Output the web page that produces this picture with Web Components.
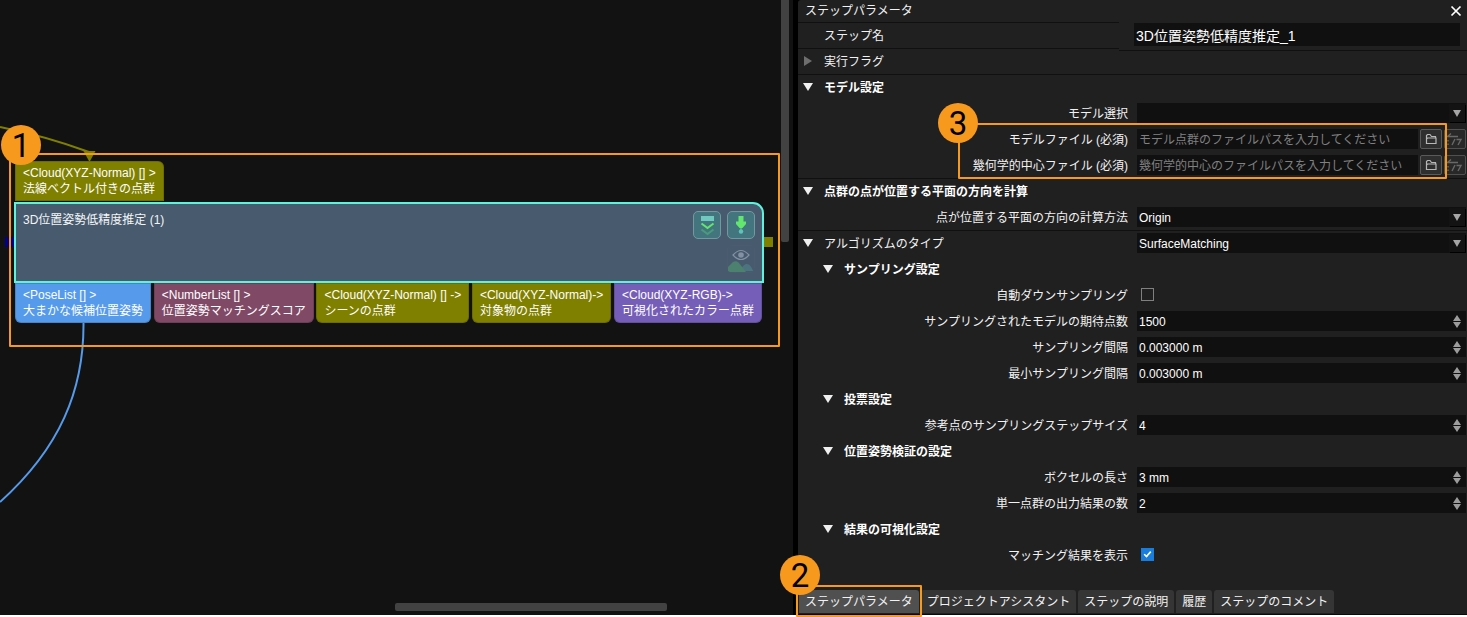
<!DOCTYPE html>
<html lang="ja">
<head>
<meta charset="utf-8">
<title>ステップパラメータ</title>
<style>
html { background: #fff; }
body { margin: 0; font: 12px/16px "Liberation Sans", "Noto Sans CJK JP", sans-serif; color: #f2f2f2; }
</style>
</head>
<body>
<vision-app></vision-app>
<script>
function define(name, html, build) {
  const template = document.createElement('template');
  template.innerHTML = html;
  customElements.define(name, class extends HTMLElement {
    connectedCallback() {
      if (this.shadowRoot) return;
      const root = this.attachShadow({ mode: 'open' });
      root.append(template.content.cloneNode(true));
      if (build) build(this, root);
    }
  });
}

/* Outline with a numbered badge on its corner */
define('call-out', `
<style>
:host { position: absolute; box-sizing: border-box; border: 2px solid #f7991d; border-radius: 1px; pointer-events: none; z-index: 5; }
b { position: absolute; left: var(--bx, -10px); top: var(--by, -30px); width: 40px; height: 40px; border-radius: 50%; background: #f7991d; color: #000; font: 400 33px/42px Roboto, sans-serif; text-align: center; }
</style><b><slot></slot></b>`);

/* Typed port of a step */
define('step-port', `
<style>
:host { display: block; box-sizing: border-box; height: 40px; padding: 4px 8px; background: var(--port, #808000); color: #fff; border-radius: 0 0 6px 6px; white-space: nowrap; box-shadow: inset 0 0 0 1px rgba(0,0,0,.15); }
:host([input]) { border-radius: 0 6px 0 0; }
div { height: 16px; }
</style><div><slot name="type"></slot></div><div><slot></slot></div>`);

define('step-node', `
<style>
:host { display: block; }
.in { display: flex; margin-left: 1px; }
.body { position: relative; box-sizing: border-box; width: 750px; height: 81px; margin: 1px 0 0; padding: 8px 7px; border: 2px solid #5cf2dc; border-radius: 0 11px 0 0; background: #485a6e; display: flex; justify-content: space-between; color: #f2f5f7; }
.tools { display: grid; grid-template-columns: 28px 28px; gap: 6px; align-content: start; margin-top: -1px; }
button { width: 28px; height: 28px; padding: 0; border: 1px solid #73999f; border-radius: 5px; background: #43757f; display: block; }
button.view { grid-column: 2; border-color: #4b5c70; background: none; }
svg { display: block; }
.out { display: flex; justify-content: space-between; width: 747px; margin-left: 1px; }
</style>
<div class="in"><slot name="in"></slot></div>
<div class="body"><span><slot name="name"></slot></span>
<div class="tools">
<button aria-label="ここまで実行"><svg width="26" height="26"><path fill="#6fc9bf" d="M7 4h13v5H7z"/><path d="M7.500 11.500l6 4.500 6-4.500" fill="none" stroke="#62e66e" stroke-width="2"/><path d="M7.500 17.500l6 4.500 6-4.500" fill="none" stroke="#4a9b7d" stroke-width="2"/></svg></button>
<button aria-label="実行"><svg width="26" height="26"><path fill="#62e66e" d="M10.500 4h5v5.500H18v2.500l-3.500 4h-3L8 12V9.500h2.500z"/><path d="M13 15v4" stroke="#62e66e" stroke-width="1"/><circle cx="13" cy="19.500" r="2.200" fill="#5fc3bd"/></svg></button>
<button class="view" aria-label="表示"><svg width="26" height="26"><path d="M12 25c3-5 4-7 7-7 3 0 5 4 6 7z" fill="#4b7480"/><path d="M0 25v-4l5-5c2-1 4-1 6 1l7 9H2z" fill="#4c806f"/><path d="M5 9q8-9 16 0q-8 9-16 0z" fill="none" stroke="#8291a3" stroke-width="1.200"/><circle cx="13" cy="9" r="2.800" fill="#8291a3"/></svg></button>
</div></div>
<div class="out"><slot name="out"></slot></div>`);

define('graph-canvas', `
<style>
:host { display: block; position: relative; background: #121212; min-width: 0; }
.edges { position: absolute; left: 0; top: 0; }
.lane { position: absolute; inset: 0; overflow: hidden; }
step-node { position: absolute; left: 14px; top: 161px; }
.v, .h { position: absolute; background: #424242; border-radius: 2px; }
.v { right: 4px; top: 0; width: 8px; height: 242px; border-radius: 0 0 2px 2px; }
.h { left: 395px; bottom: 4px; width: 272px; height: 8px; }
</style>
<div class="lane">
<svg class="edges" width="780" height="600">
<path d="M0 127Q45 136 89 152" fill="none" stroke="#808000" stroke-width="2"/>
<path d="M83.500 151h12l-6 11z" fill="#808000"/>
<path d="M83.500 323C84 390 60 448 0 502" fill="none" stroke="#559aeb" stroke-width="2"/>
<path d="M5 237h10v10H5z" fill="#00008b"/><path d="M763 237h10v10h-10z" fill="#808000"/>
</svg>
<step-node>
<step-port slot="in" input><span slot="type">&lt;Cloud(XYZ-Normal) [] &gt;</span>法線ベクトル付きの点群</step-port>
<span slot="name">3D位置姿勢低精度推定 (1)</span>
<step-port slot="out" style="--port:#559aeb"><span slot="type">&lt;PoseList [] &gt;</span>大まかな候補位置姿勢</step-port>
<step-port slot="out" style="--port:#804a67"><span slot="type">&lt;NumberList [] &gt;</span>位置姿勢マッチングスコア</step-port>
<step-port slot="out"><span slot="type">&lt;Cloud(XYZ-Normal) [] -&gt;</span>シーンの点群</step-port>
<step-port slot="out"><span slot="type">&lt;Cloud(XYZ-Normal)-&gt;</span>対象物の点群</step-port>
<step-port slot="out" style="--port:#755eb8"><span slot="type">&lt;Cloud(XYZ-RGB)-&gt;</span>可視化されたカラー点群</step-port>
</step-node>
<div class="v"></div><div class="h"></div>
</div>
<call-out style="left:9px;top:153px;width:771px;height:194px;--bx:-10px;--by:-30px">1</call-out>`);

/* One line of the parameter tree */
const controls = {
  group: () => '',
  name: v => `<input id="c" class="field title" value="${v}">`,
  select: v => `<span class="wrap"><select id="c" class="field"><option>${v}</option></select><svg class="drop" width="16" height="18"><path d="M4 6h8l-4 7z" fill="#a6a6a6"/></svg></span>`,
  spin: v => `<span class="wrap"><input id="c" class="field" value="${v}"><span class="steps"><button aria-label="増やす"><svg width="8" height="6"><path d="M0 6h8L4 0z" fill="#9c9c9c"/></svg></button><button aria-label="減らす"><svg width="8" height="6"><path d="M0 0h8L4 6z" fill="#9c9c9c"/></svg></button></span></span>`,
  check: v => `<input id="c" type="checkbox" ${v ? 'checked' : ''}>`,
  file: v => `<span class="files"><input id="c" class="field" placeholder="${v}"><button class="tool" aria-label="ファイルを開く"><svg width="20" height="18"><path d="M5.500 13V5.500l1-1H9l1.500 2h4V8M5.500 13.500V9l1-1h8.500v5.500z" fill="none" stroke="#b8b8b8" stroke-width="1.200"/></svg></button><button class="tool dim" aria-label="エディターで開く"><svg width="20" height="18"><path d="M1 6.500h12M6 3.500L2.500 6.500M3 10v1.500M3 13.500V15M10 9L7 15M11.500 9.500H16L13 15" fill="none" stroke="#686868" stroke-width="1.400"/></svg></button></span>`
};
define('param-row', `
<style>
:host { display: grid; grid-template-columns: minmax(0, 339fr) minmax(0, 329fr); box-sizing: border-box; height: 26px; align-items: center; padding-right: 1px; --line: transparent; background: linear-gradient(var(--line), var(--line)) 0 0 / 100% 1px no-repeat; }
:host([rule]) { --line: #101010; }
:host([rule="half"]) { background-size: 321px 1px; }
:host([rule="step"]) { background: linear-gradient(#101010, #101010) 0 0 / 321px 1px no-repeat, linear-gradient(#101010, #101010) 321px 2px / 100% 1px no-repeat; }
.label { text-align: right; padding-right: 9px; white-space: nowrap; }
.text { display: block; padding-top: 2px; }
.head { display: flex; align-items: center; text-align: left; padding-left: 26px; }
:host([nested]) .head { padding-left: 46px; }
:host([bold]) .head { font-weight: 700; color: #fff; }
.fold { box-sizing: border-box; width: 12px; height: 16px; margin: 0 10px 0 -22px; padding: 0; border: 0; background: none; }
.fold svg { display: block; margin: 3px 0; }
input, select, button { font: inherit; color: inherit; }
.field { appearance: none; box-sizing: border-box; display: block; width: 100%; min-width: 0; height: 20px; margin: 0; padding: 2px 2px 0; border: 0; border-radius: 0; background: #101010; outline: 0; color: #fff; }
.field::placeholder { color: #808080; opacity: 1; }
:host([kind="name"]) { grid-template-columns: minmax(0, 336fr) minmax(0, 326fr); padding-right: 7px; }
.title { height: 23px; font-size: 14px; align-self: start; margin-top: 1px; padding-top: 0; }
.wrap { display: block; position: relative; }
.drop { position: absolute; right: 1px; top: 1px; pointer-events: none; box-shadow: 1px 1px 0 #000; background: #131313; }
.steps { position: absolute; right: 5px; top: 4px; display: grid; gap: 1px; }
.steps button { display: block; width: 8px; height: 6px; padding: 0; border: 0; background: none; }
.steps svg { display: block; }
input[type=checkbox] { appearance: none; box-sizing: border-box; width: 13px; height: 13px; margin: 0 0 2px 4px; border: 1px solid #808080; background: #202020; position: relative; }
input[type=checkbox]:checked { border-color: #187ddc; background: #187ddc; }
input[type=checkbox]:checked::after { content: ""; position: absolute; left: 3px; top: 0; width: 3px; height: 7px; border: solid #fff; border-width: 0 2px 2px 0; box-sizing: content-box; transform: rotate(42deg) scale(.8); }
.files { display: grid; grid-template-columns: minmax(0, 1fr) 22px 22px; gap: 2px; }
.tool { box-sizing: border-box; width: 22px; height: 20px; padding: 0; border: 1px solid #5a5a5a; border-radius: 2px; background: #2f2f2f; }
.tool svg { display: block; }
.dim { background: #282828; border-color: #505050; }
</style>`, (el, root) => {
  const kind = el.getAttribute('kind') || 'group';
  const text = el.getAttribute('label');
  const value = el.getAttribute('value') || '';
  const fold = el.getAttribute('fold');
  const icon = fold === 'closed'
    ? '<path d="M2 0v10l8-5z" fill="#6e6e6e"/>'
    : '<path d="M1 1h10L6 9z" fill="#f0f0f0"/>';
  const head = fold ? `<button class="fold" aria-label="開閉"><svg width="12" height="10">${icon}</svg></button>` : '';
  const name = kind === 'group' ? `<span class="text">${text}</span>` : `<label class="text" for="c">${text}</label>`;
  const left = fold || kind === 'name';
  const box = document.createElement('template');
  box.innerHTML = `<div class="label ${left ? 'head' : ''}">${head}${name}</div>${controls[kind](value)}`;
  root.append(box.content);
});

define('tab-bar', `
<style>
:host { display: flex; gap: 2px; padding: 0 0 1px 1px; border-bottom: 1px solid #0a0a0a; }
::slotted(button) { box-sizing: border-box; height: 23px; padding: 0 6px; margin: 0; border: 0; border-radius: 3px 3px 0 0; background: #353535; color: #f2f2f2; font: inherit; white-space: nowrap; }
::slotted(button[aria-selected=true]) { background: #505050; }
</style><slot></slot>`);

define('param-panel', `
<style>
:host { display: flex; flex-direction: column; position: relative; background: #202020; border-radius: 3px 0 0 0; min-width: 0; }
header { display: flex; align-items: center; justify-content: space-between; height: 22px; padding: 0 5px 0 7px; }
header button { width: 12px; height: 12px; padding: 0; border: 0; background: none; }
header svg { display: block; }
.rows { flex: 1; }
</style>
<header><span>ステップパラメータ</span><button aria-label="閉じる"><svg width="12" height="12"><path d="M1.500 1.500l9 9M10.500 1.500l-9 9" stroke="#fff" stroke-width="1.700"/></svg></button></header>
<div class="rows">
<param-row rule="half" kind="name" label="ステップ名" value="3D位置姿勢低精度推定_1"></param-row>
<param-row rule="step" fold="closed" label="実行フラグ"></param-row>
<param-row rule fold="open" bold label="モデル設定"></param-row>
<param-row kind="select" label="モデル選択"></param-row>
<param-row kind="file" label="モデルファイル (必須)" value="モデル点群のファイルパスを入力してください"></param-row>
<param-row kind="file" label="幾何学的中心ファイル (必須)" value="幾何学的中心のファイルパスを入力してください"></param-row>
<param-row rule fold="open" bold label="点群の点が位置する平面の方向を計算"></param-row>
<param-row kind="select" label="点が位置する平面の方向の計算方法" value="Origin"></param-row>
<param-row rule fold="open" kind="select" label="アルゴリズムのタイプ" value="SurfaceMatching"></param-row>
<param-row nested fold="open" bold label="サンプリング設定"></param-row>
<param-row kind="check" label="自動ダウンサンプリング"></param-row>
<param-row kind="spin" label="サンプリングされたモデルの期待点数" value="1500"></param-row>
<param-row kind="spin" label="サンプリング間隔" value="0.003000 m"></param-row>
<param-row kind="spin" label="最小サンプリング間隔" value="0.003000 m"></param-row>
<param-row nested fold="open" bold label="投票設定"></param-row>
<param-row kind="spin" label="参考点のサンプリングステップサイズ" value="4"></param-row>
<param-row nested fold="open" bold label="位置姿勢検証の設定"></param-row>
<param-row kind="spin" label="ボクセルの長さ" value="3 mm"></param-row>
<param-row kind="spin" label="単一点群の出力結果の数" value="2"></param-row>
<param-row nested fold="open" bold label="結果の可視化設定"></param-row>
<param-row kind="check" label="マッチング結果を表示" value="on"></param-row>
</div>
<tab-bar role="tablist">
<button role="tab" aria-selected="true">ステップパラメータ</button>
<button role="tab">プロジェクトアシスタント</button>
<button role="tab">ステップの説明</button>
<button role="tab">履歴</button>
<button role="tab">ステップのコメント</button>
</tab-bar>
<call-out style="left:160px;top:123px;right:20px;height:56px;--bx:-22px;--by:-22px">3</call-out>
<call-out style="left:-2px;bottom:-2px;width:126px;height:32px;--bx:-18px;--by:-32px">2</call-out>`);

define('vision-app', `
<style>
:host { display: grid; grid-template-columns: minmax(0, 793fr) 5px minmax(0, 669fr); min-height: calc(100vh - 2px); margin-bottom: 2px; background: #000; }
</style><graph-canvas></graph-canvas><span></span><param-panel></param-panel>`);
</script>
</body>
</html>
